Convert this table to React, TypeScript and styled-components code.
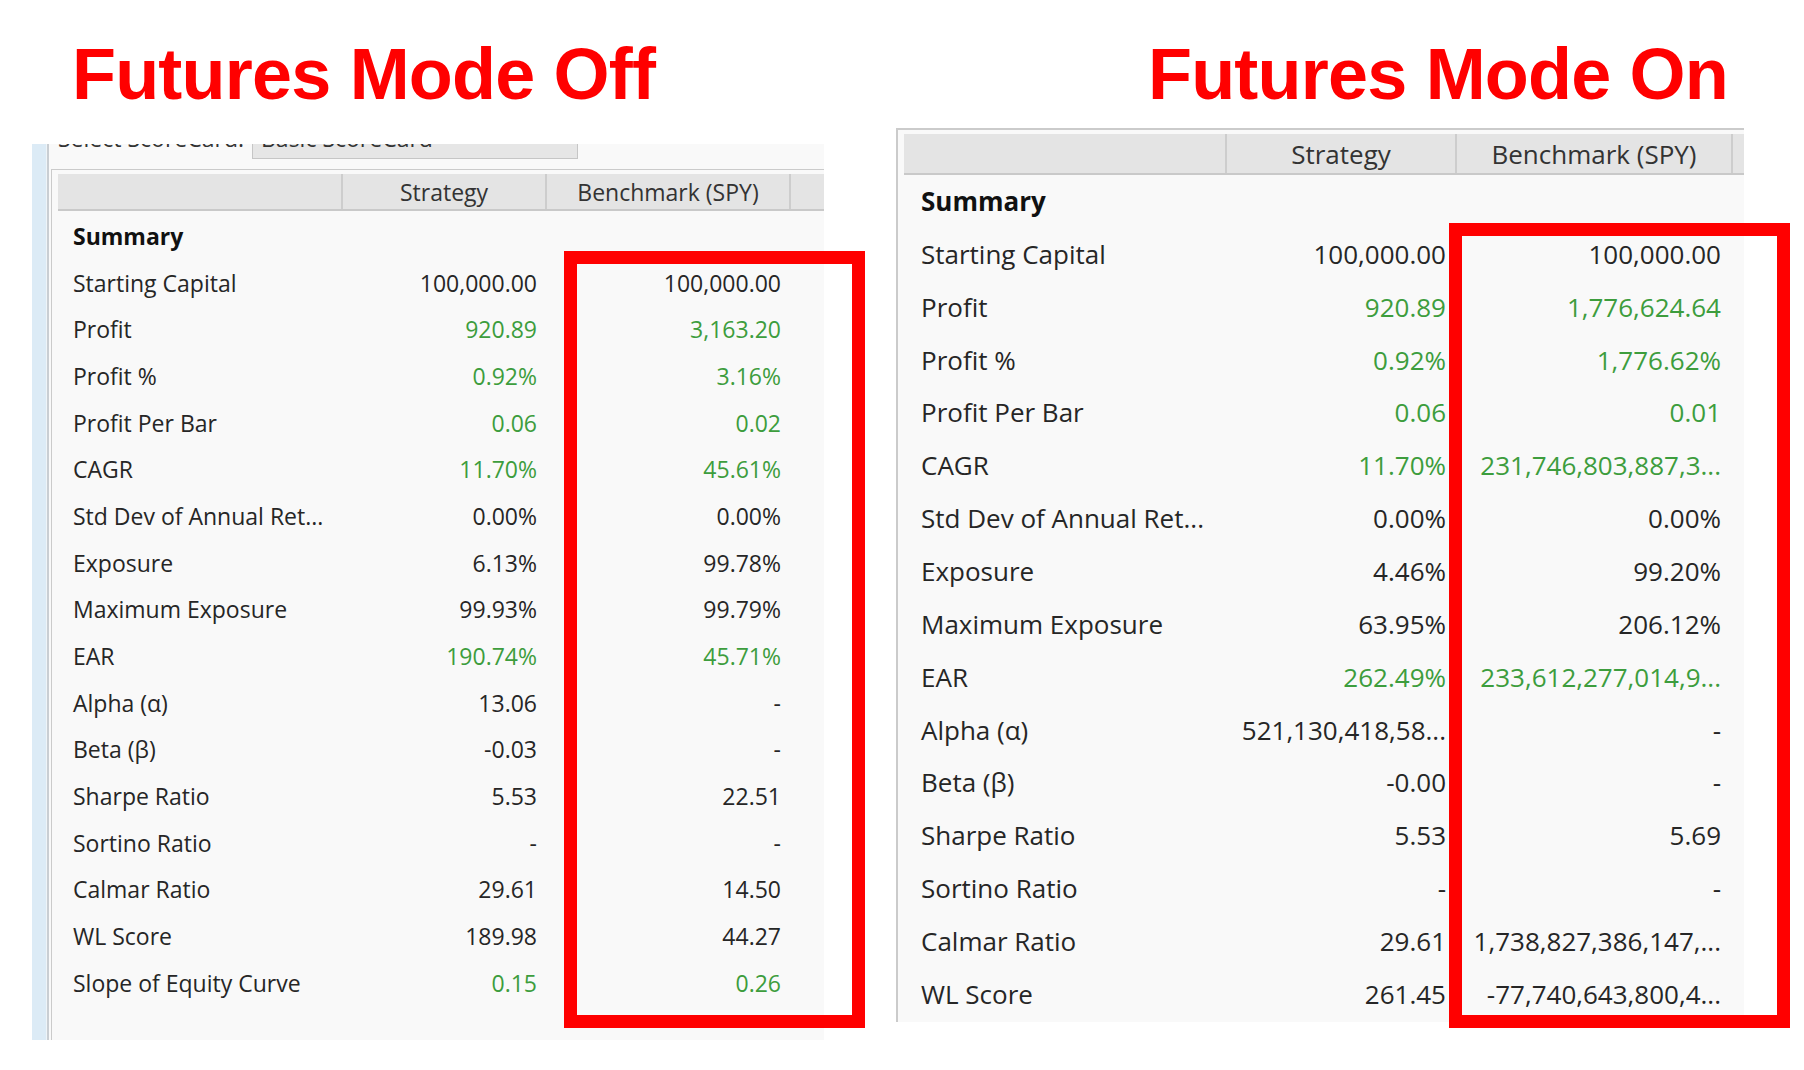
import React from 'react';
import styled, { createGlobalStyle } from 'styled-components';

const GlobalStyle = createGlobalStyle`
  html, body { margin: 0; padding: 0; background: #ffffff; }
  body { font-family: "Open Sans", "Noto Sans", sans-serif; color: #222; }
  #root { width: 1804px; height: 1070px; overflow: hidden; }
`;

type Cell = { v: string; g?: boolean };
type Row = { label: string; s: Cell; b: Cell };

interface Metrics {
  fs: number;
  rowH: number;
  cols: number[];
  headH: number;
  labelPad: number;
  valPad: [number, number];
  bodyPadTop: number;
}

const c = (v: string, g = false): Cell => ({ v, g });

const leftRows: Row[] = [
  { label: 'Starting Capital', s: c('100,000.00'), b: c('100,000.00') },
  { label: 'Profit', s: c('920.89', true), b: c('3,163.20', true) },
  { label: 'Profit %', s: c('0.92%', true), b: c('3.16%', true) },
  { label: 'Profit Per Bar', s: c('0.06', true), b: c('0.02', true) },
  { label: 'CAGR', s: c('11.70%', true), b: c('45.61%', true) },
  { label: 'Std Dev of Annual Ret...', s: c('0.00%'), b: c('0.00%') },
  { label: 'Exposure', s: c('6.13%'), b: c('99.78%') },
  { label: 'Maximum Exposure', s: c('99.93%'), b: c('99.79%') },
  { label: 'EAR', s: c('190.74%', true), b: c('45.71%', true) },
  { label: 'Alpha (α)', s: c('13.06'), b: c('-') },
  { label: 'Beta (β)', s: c('-0.03'), b: c('-') },
  { label: 'Sharpe Ratio', s: c('5.53'), b: c('22.51') },
  { label: 'Sortino Ratio', s: c('-'), b: c('-') },
  { label: 'Calmar Ratio', s: c('29.61'), b: c('14.50') },
  { label: 'WL Score', s: c('189.98'), b: c('44.27') },
  { label: 'Slope of Equity Curve', s: c('0.15', true), b: c('0.26', true) },
];

const rightRows: Row[] = [
  { label: 'Starting Capital', s: c('100,000.00'), b: c('100,000.00') },
  { label: 'Profit', s: c('920.89', true), b: c('1,776,624.64', true) },
  { label: 'Profit %', s: c('0.92%', true), b: c('1,776.62%', true) },
  { label: 'Profit Per Bar', s: c('0.06', true), b: c('0.01', true) },
  { label: 'CAGR', s: c('11.70%', true), b: c('231,746,803,887,3...', true) },
  { label: 'Std Dev of Annual Ret...', s: c('0.00%'), b: c('0.00%') },
  { label: 'Exposure', s: c('4.46%'), b: c('99.20%') },
  { label: 'Maximum Exposure', s: c('63.95%'), b: c('206.12%') },
  { label: 'EAR', s: c('262.49%', true), b: c('233,612,277,014,9...', true) },
  { label: 'Alpha (α)', s: c('521,130,418,58...'), b: c('-') },
  { label: 'Beta (β)', s: c('-0.00'), b: c('-') },
  { label: 'Sharpe Ratio', s: c('5.53'), b: c('5.69') },
  { label: 'Sortino Ratio', s: c('-'), b: c('-') },
  { label: 'Calmar Ratio', s: c('29.61'), b: c('1,738,827,386,147,...') },
  { label: 'WL Score', s: c('261.45'), b: c('-77,740,643,800,4...') },
];

const leftMetrics: Metrics = {
  fs: 23,
  rowH: 46.67,
  cols: [285, 204, 244, 80],
  headH: 37,
  labelPad: 15,
  valPad: [10, 10],
  bodyPadTop: 2,
};

const rightMetrics: Metrics = {
  fs: 26,
  rowH: 52.86,
  cols: [323, 230, 276, 60],
  headH: 41,
  labelPad: 17,
  valPad: [11, 12],
  bodyPadTop: 0,
};

/* ---------- layout ---------- */

const Page = styled.div`
  display: flex;
  width: 1804px;
  height: 1070px;
  background: #ffffff;
`;

const Column = styled.div<{ $w: number }>`
  position: relative;
  flex: 0 0 ${(p) => p.$w}px;
  display: flex;
  flex-direction: column;
  align-items: flex-start;
`;

const Title = styled.h1<{ $ml: number }>`
  margin: 38px 0 0 ${(p) => p.$ml}px;
  font-family: "Liberation Sans", Arial, sans-serif;
  font-weight: 700;
  font-size: 72px;
  line-height: 72px;
  letter-spacing: -0.8px;
  color: #ff0000;
  white-space: nowrap;
`;

const Panel = styled.div<{ $mt: number; $ml: number; $w: number; $h: number }>`
  margin: ${(p) => p.$mt}px 0 0 ${(p) => p.$ml}px;
  width: ${(p) => p.$w}px;
  height: ${(p) => p.$h}px;
  background: #f9f9f9;
  overflow: hidden;
  display: flex;
  flex-direction: row;
`;

const WindowStrip = styled.div`
  flex: 0 0 14px;
  background: #dcebf6;
  border-right: 1px solid #eef4f8;
`;

const StripLine = styled.div`
  flex: 0 0 2px;
  background: #c9ced3;
`;

const Content = styled.div`
  flex: 1;
  min-width: 0;
  display: flex;
  flex-direction: column;
  padding-left: 2px;
`;

const ComboRow = styled.div`
  display: flex;
  align-items: flex-start;
  height: 36px;
  margin-top: -21px;
  padding-left: 7px;
  font-size: 23px;
  color: #333;
  white-space: nowrap;
`;

const ComboLabel = styled.div`
  flex: 0 0 194px;
  line-height: 30px;
`;

const ComboBox = styled.div`
  align-self: flex-end;
  box-sizing: border-box;
  width: 326px;
  height: 32px;
  background: #e6e6e6;
  border: 1px solid #c6c6c6;
  padding-left: 8px;
  line-height: 20px;
  color: #333;
`;

const Frame = styled.div<{ $mt: number; $bw: number }>`
  flex: 1;
  margin-top: ${(p) => p.$mt}px;
  border-top: ${(p) => p.$bw}px solid #cbcbcb;
  border-left: ${(p) => p.$bw}px solid #cbcbcb;
  padding: 4px 0 0 6px;
  display: flex;
  flex-direction: column;
`;

const HeaderRow = styled.div<{ $m: Metrics }>`
  display: grid;
  grid-template-columns: ${(p) => p.$m.cols.map((w) => `${w}px`).join(' ')};
  height: ${(p) => p.$m.headH}px;
  box-sizing: border-box;
  background: #e4e4e4;
  border-bottom: 2px solid #c9c9c9;
  font-size: ${(p) => p.$m.fs}px;
  color: #333;
`;

const HeadCell = styled.div<{ $last?: boolean }>`
  display: flex;
  align-items: center;
  justify-content: center;
  box-sizing: border-box;
  border-right: ${(p) => (p.$last ? 'none' : '2px solid #cdcdcd')};
  white-space: nowrap;
  overflow: hidden;
`;

const Body = styled.div<{ $m: Metrics }>`
  display: flex;
  flex-direction: column;
  padding-top: ${(p) => p.$m.bodyPadTop}px;
  font-size: ${(p) => p.$m.fs}px;
`;

const DataRow = styled.div<{ $m: Metrics }>`
  display: grid;
  grid-template-columns: ${(p) => p.$m.cols.map((w) => `${w}px`).join(' ')};
  height: ${(p) => p.$m.rowH}px;
  line-height: ${(p) => p.$m.rowH}px;
  white-space: nowrap;
`;

const LabelCell = styled.div<{ $pad: number; $bold?: boolean }>`
  padding-left: ${(p) => p.$pad}px;
  font-weight: ${(p) => (p.$bold ? 700 : 400)};
  color: ${(p) => (p.$bold ? '#111' : '#262626')};
  overflow: hidden;
`;

const ValueCell = styled.div<{ $pad: number; $green?: boolean }>`
  box-sizing: border-box;
  padding-right: ${(p) => p.$pad}px;
  text-align: right;
  color: ${(p) => (p.$green ? '#3d9d3d' : '#262626')};
  overflow: hidden;
`;

const RedBox = styled.div<{ $x: number; $y: number; $w: number; $h: number }>`
  position: absolute;
  left: ${(p) => p.$x}px;
  top: ${(p) => p.$y}px;
  width: ${(p) => p.$w}px;
  height: ${(p) => p.$h}px;
  box-sizing: border-box;
  border: 13px solid #ff0000;
  pointer-events: none;
`;

/* ---------- components ---------- */

const ScoreTable: React.FC<{ m: Metrics; rows: Row[] }> = ({ m, rows }) => (
  <>
    <HeaderRow $m={m}>
      <HeadCell />
      <HeadCell>Strategy</HeadCell>
      <HeadCell>Benchmark (SPY)</HeadCell>
      <HeadCell $last />
    </HeaderRow>
    <Body $m={m}>
      <DataRow $m={m}>
        <LabelCell $pad={m.labelPad} $bold>
          Summary
        </LabelCell>
      </DataRow>
      {rows.map((r) => (
        <DataRow $m={m} key={r.label}>
          <LabelCell $pad={m.labelPad}>{r.label}</LabelCell>
          <ValueCell $pad={m.valPad[0]} $green={r.s.g}>
            {r.s.v}
          </ValueCell>
          <ValueCell $pad={m.valPad[1]} $green={r.b.g}>
            {r.b.v}
          </ValueCell>
        </DataRow>
      ))}
    </Body>
  </>
);

export default function App() {
  return (
    <>
      <GlobalStyle />
      <Page>
        <Column $w={880}>
          <Title $ml={72}>Futures Mode Off</Title>
          <Panel $mt={34} $ml={32} $w={792} $h={896}>
            <WindowStrip />
            <StripLine />
            <Content>
              <ComboRow>
                <ComboLabel>Select ScoreCard:</ComboLabel>
                <ComboBox>Basic ScoreCard</ComboBox>
              </ComboRow>
              <Frame $mt={10} $bw={1}>
                <ScoreTable m={leftMetrics} rows={leftRows} />
              </Frame>
            </Content>
          </Panel>
          <RedBox $x={564} $y={251} $w={301} $h={777} />
        </Column>
        <Column $w={924}>
          <Title $ml={268}>Futures Mode On</Title>
          <Panel $mt={18} $ml={16} $w={848} $h={894}>
            <Frame $mt={0} $bw={2}>
              <ScoreTable m={rightMetrics} rows={rightRows} />
            </Frame>
          </Panel>
          <RedBox $x={569} $y={223} $w={341} $h={805} />
        </Column>
      </Page>
    </>
  );
}
